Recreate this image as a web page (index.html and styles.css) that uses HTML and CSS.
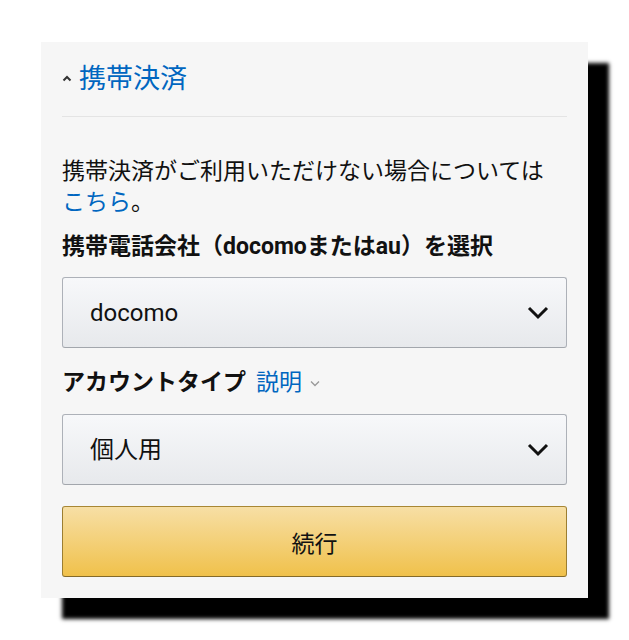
FILE: index.html
```html
<!DOCTYPE html>
<html lang="ja">
<head>
<meta charset="utf-8">
<link rel="stylesheet" href="styles.css">
</head>
<body>
<div class="panel">
  <div class="header">
    <svg class="caret" width="10" height="7" viewBox="0 0 10 7"><path d="M1.5 5.5 L5 2 L8.5 5.5" fill="none" stroke="#333" stroke-width="2"/></svg>
    <span class="title">携帯決済</span>
  </div>
  <p class="note">携帯決済がご利用いただけない場合については<br><a class="link">こちら</a>。</p>
  <div class="label">携帯電話会社（docomoまたはau）を選択</div>
  <div class="select">
    <span>docomo</span>
    <svg class="chev" width="22" height="14" viewBox="0 0 22 14"><path d="M2 2 L11 11 L20 2" fill="none" stroke="#111" stroke-width="3"/></svg>
  </div>
  <div class="label label2">アカウントタイプ <a class="link">説明</a><svg class="mini" width="10" height="7" viewBox="0 0 10 7"><path d="M1 1.5 L5 5.5 L9 1.5" fill="none" stroke="#999" stroke-width="1.3"/></svg></div>
  <div class="select select2">
    <span>個人用</span>
    <svg class="chev" width="22" height="14" viewBox="0 0 22 14"><path d="M2 2 L11 11 L20 2" fill="none" stroke="#111" stroke-width="3"/></svg>
  </div>
  <div class="button">続行</div>
</div>
</body>
</html>
```
FILE: styles.css
```css
html, body {
  margin: 0;
  padding: 0;
  background: #fff;
}
body {
  font-family: Roboto, "Noto Sans CJK JP", sans-serif;
  font-size: 23px;
  color: #111;
  min-height: 640px;
  overflow: hidden;
}
.panel {
  margin: 42px 0 0 41px;
  width: 505px;
  padding: 0 21px 21px;
  background: #f6f6f6;
  box-shadow: 21px 21px 4px #000;
}
.header {
  display: flex;
  align-items: center;
  padding: 22px 0 22px;
  border-bottom: 1px solid #e4e4e4;
  height: 30px;
}
.caret {
  margin: 0 7px 0 0;
  position: relative;
  top: -1px;
}
.title {
  font-size: 27px;
  line-height: 30px;
  color: #0066c0;
}
.note {
  margin: 39px 0 0;
  line-height: 31px;
}
.link {
  color: #0066c0;
}
.label {
  margin-top: 14px;
  line-height: 30px;
  font-weight: bold;
  display: flex;
  align-items: center;
}
.label2 {
  margin-top: 20px;
}
.label2 .link {
  font-weight: normal;
  margin-left: 10px;
}
.mini {
  margin-left: 8px;
}
.select {
  margin-top: 15px;
  height: 69px;
  border: 1px solid #adb1b8;
  border-bottom-color: #a2a6ac;
  border-radius: 3px;
  background: linear-gradient(#f7f8fa, #e7e9ec);
  display: flex;
  align-items: center;
  justify-content: space-between;
  padding: 0 17px 0 27px;
  font-size: 24px;
}
.select2 {
  margin-top: 16px;
}
.select2 span {
  position: relative;
  top: -2px;
}
.button {
  margin-top: 21px;
  height: 69px;
  border: 1px solid #a88734;
  border-color: #a88734 #9c7e31 #846a29;
  border-radius: 3px;
  background: linear-gradient(#f7dfa5, #f0c14b);
  display: flex;
  align-items: center;
  justify-content: center;
  color: #111;
}
```
